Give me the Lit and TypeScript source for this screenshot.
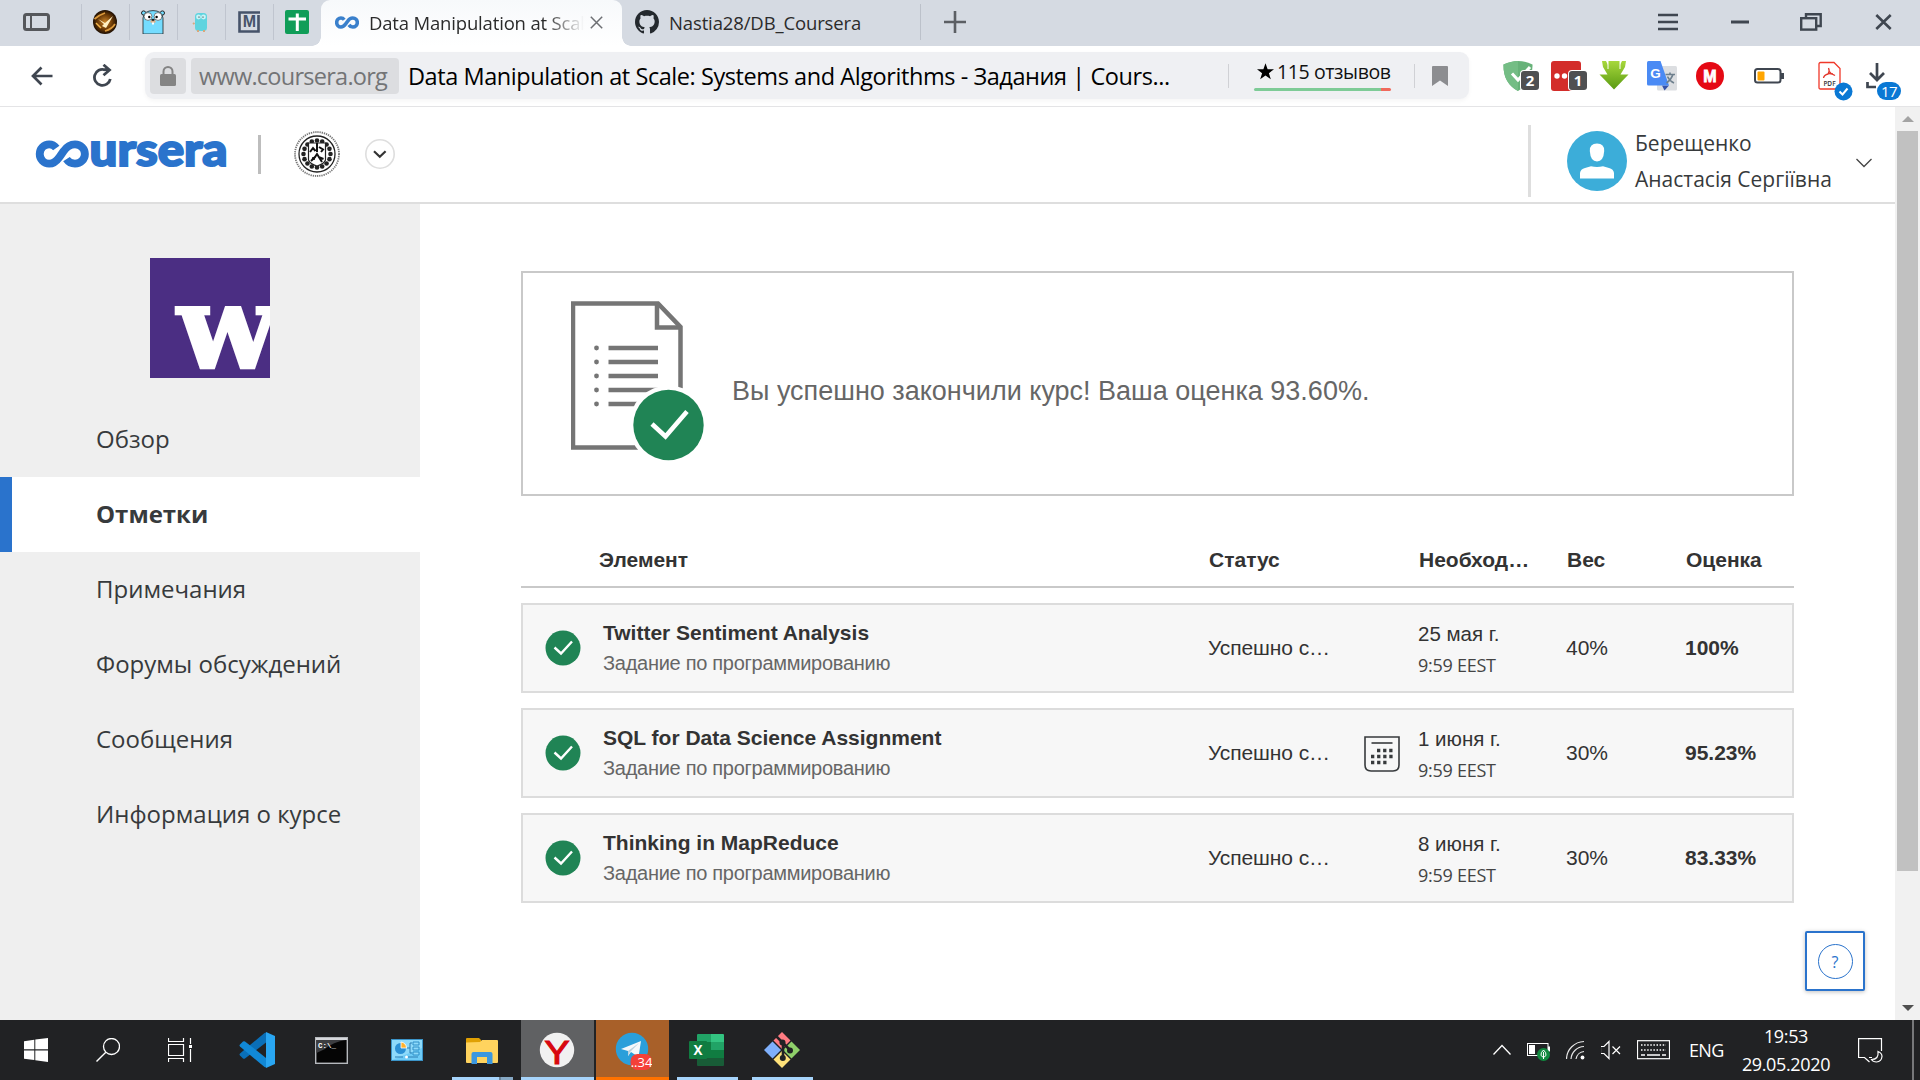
import { LitElement, html, css, svg } from "lit";
import { customElement, property } from "lit/decorators.js";
import { classMap } from "lit/directives/class-map.js";

/* ---------- shared pictures ---------- */

const infinity = (color: string) => svg`
  <path d="M19.5 7.2C17.8 4.9 15.3 3.6 12.6 3.6C7.6 3.6 3.6 7.8 3.6 13S7.6 22.4 12.6 22.4C17 22.4 20 19.6 22.8 15.6L26.6 10.2C29.2 6.3 33 3.6 37.5 3.6C43 3.6 47 7.8 47 13S43 22.4 37.5 22.4C34 22.4 31.2 20.8 29.3 18"
    fill="none" stroke=${color} stroke-width="7.6"/>`;

/* ---------- browser tab strip ---------- */

@customElement("tab-strip")
export class TabStrip extends LitElement {
  static styles = css`
    :host { display: flex; height: 46px; background: #d5dae2; font-family: "Open Sans", "Noto Sans", sans-serif; color: #2b2b2b; }
    .cell { width: 48px; height: 46px; display: flex; align-items: center; justify-content: center; padding-bottom: 2px; box-sizing: border-box; background: linear-gradient(#c0c5cf, #c0c5cf) left 4px / 1px 36px no-repeat; }
    .panel { width: 81px; height: 46px; flex: none; display: flex; align-items: center; padding-left: 23px; padding-bottom: 2px; box-sizing: border-box; }
    .active { width: 301px; height: 46px; margin-left: 0; box-sizing: border-box; padding: 0 18px 2px 14px; display: flex; align-items: center; border-radius: 9px 9px 0 0; background: linear-gradient(#f7f9fb, #fff); flex: none; }
    .title { font-size: 18.5px; letter-spacing: -0.17px; white-space: nowrap; overflow: hidden; width: 215px; margin-left: 10px; mask-image: linear-gradient(90deg, #000 82%, transparent 100%); }
    .close { margin-left: 6px; flex: none; }
    .flare { width: 9px; height: 46px; flex: none; }
    .flare.l { background: radial-gradient(circle at 0 0, transparent 8.5px, #fff 9px) 0 37px / 9px 9px no-repeat; margin-left: -9px; }
    .flare.r { background: radial-gradient(circle at 9px 0, transparent 8.5px, #fff 9px) 0 37px / 9px 9px no-repeat; }
    .other { width: 290px; box-sizing: border-box; padding: 0 0 2px 4px; display: flex; align-items: center; background: linear-gradient(#bcc1ca, #bcc1ca) right 4px / 1px 36px no-repeat; }
    .repo { font-size: 18.5px; letter-spacing: -0.13px; margin-left: 10px; white-space: nowrap; }
    .plus { margin-left: 23px; align-self: center; margin-bottom: 2px; }
    .win { display: flex; align-items: center; margin-left: auto; padding: 0 28px 2px 0; }
    .win svg:nth-child(1) { margin-right: 52px; }
    .win svg:nth-child(2) { margin-right: 51px; }
    .win svg:nth-child(3) { margin-right: 53px; }
    svg { display: block; flex: none; }
  `;
  render() {
    return html`
      <div class="panel"><svg width="27" height="18" viewBox="0 0 27 18"><rect x="1.5" y="1.5" width="24" height="15" rx="2" fill="none" stroke="#55575b" stroke-width="3"/><path d="M8 2V16" stroke="#55575b" stroke-width="2"/></svg></div>
      <div class="cell"><svg width="24" height="24" viewBox="0 0 24 24"><defs><radialGradient id="g"><stop offset="0" stop-color="#c9842a"/><stop offset=".6" stop-color="#6e3c07"/><stop offset="1" stop-color="#1d0e02"/></radialGradient></defs><circle cx="12" cy="12" r="12" fill="url(#g)"/><path d="M1.500 9Q6 5 12 3M22 14Q19 19 12 21" stroke="#dc9a3c" stroke-width="1.800" fill="none"/><path d="M5 9L12 13L20 6L13 18L9 16L11 14Z" fill="#fff1c4"/><path d="M3 13L8 18" stroke="#f4b64c" stroke-width="1.500"/></svg></div>
      <div class="cell"><svg width="24" height="24" viewBox="0 0 24 24"><circle cx="2.6" cy="3" r="2.1" fill="#74dcff" stroke="#222"/><circle cx="21.4" cy="3" r="2.1" fill="#74dcff" stroke="#222"/><path d="M2 24V8Q3 .6 12 .6T22 8V24Z" fill="#74dcff" stroke="#222" stroke-width=".8"/><circle cx="7" cy="6.5" r="3.9" fill="#fff" stroke="#333" stroke-width=".6"/><circle cx="17" cy="6.5" r="3.9" fill="#fff" stroke="#333" stroke-width=".6"/><circle cx="8.3" cy="7" r="1.2"/><circle cx="15.6" cy="7" r="1.2"/><ellipse cx="12" cy="11.4" rx="2.8" ry="1.7" fill="#d8b390"/><ellipse cx="12" cy="9.8" rx="1.7" ry="1.1" fill="#222"/><path d="M11 12.6h2v2h-2z" fill="#fff"/></svg></div>
      <div class="cell"><svg width="24" height="24" viewBox="0 0 24 24"><rect x="6" y="3" width="12" height="18" rx="3.500" fill="#5fd4df"/><path d="M9 20v2M15 20v2M5.500 13l-1.500 1" stroke="#d9a87c" stroke-width="2"/><circle cx="9.500" cy="7" r="2.4" fill="#c9f3f7"/><circle cx="14.500" cy="7" r="2.4" fill="#c9f3f7"/><circle cx="10" cy="7" r=".6"/><circle cx="14" cy="7" r=".6"/></svg></div>
      <div class="cell"><svg width="22" height="22" viewBox="0 0 22 22"><path d="M22 1.5H1.5V20.5H20.5V4" fill="none" stroke="#46536a" stroke-width="2.6"/><text x="11.500" y="16.4" text-anchor="middle" font-family="Liberation Sans" font-weight="700" font-size="16" fill="#46536a">M</text></svg></div>
      <div class="cell"><svg width="24" height="24" viewBox="0 0 24 24"><rect width="24" height="24" rx="2" fill="#109d58"/><path d="M12.3 3.5V21M3.5 9H21" stroke="#fff" stroke-width="3"/></svg></div>
      <div class="flare l"></div>
      <div class="active">
        <svg width="24" height="13" viewBox="0 0 50.6 26">${infinity("#3a80cc")}</svg>
        <div class="title">Data Manipulation at Scale</div>
        <svg class="close" width="13" height="13" viewBox="0 0 13 13"><path d="M.8.8L12.2 12.2M12.2.8L.8 12.2" stroke="#6d6f73" stroke-width="1.5"/></svg>
      </div>
      <div class="flare r"></div>
      <div class="other">
        <svg width="24" height="24" viewBox="0 0 16 16"><path fill="#24292e" d="M8 0C3.58 0 0 3.58 0 8c0 3.54 2.29 6.53 5.47 7.59.4.07.55-.17.55-.38 0-.19-.01-.82-.01-1.49-2.01.37-2.53-.49-2.69-.94-.09-.23-.48-.94-.82-1.13-.28-.15-.68-.52-.01-.53.63-.01 1.08.58 1.23.82.72 1.21 1.87.87 2.33.66.07-.52.28-.87.51-1.07-1.78-.2-3.64-.89-3.64-3.95 0-.87.31-1.59.82-2.15-.08-.2-.36-1.02.08-2.12 0 0 .67-.21 2.2.82.64-.18 1.32-.27 2-.27s1.36.09 2 .27c1.53-1.04 2.2-.82 2.2-.82.44 1.1.16 1.92.08 2.12.51.56.82 1.27.82 2.15 0 3.07-1.87 3.75-3.65 3.95.29.25.54.73.54 1.48 0 1.07-.01 1.93-.01 2.2 0 .21.15.46.55.38A8.01 8.01 0 0 0 16 8c0-4.42-3.58-8-8-8z"/></svg>
        <div class="repo">Nastia28/DB_Coursera</div>
      </div>
      <svg class="plus" width="22" height="22" viewBox="0 0 22 22"><path d="M11 0V22M0 11H22" stroke="#5c5f64" stroke-width="2.6"/></svg>
      <div class="win">
        <svg width="22" height="18" viewBox="0 0 22 18"><path d="M1 2H21M1 9H21M1 16H21" stroke="#3f4650" stroke-width="2.6"/></svg>
        <svg width="18" height="18" viewBox="0 0 18 18"><path d="M0 9H18" stroke="#3f4650" stroke-width="3"/></svg>
        <svg width="22" height="18" viewBox="0 0 22 18"><rect x="1.2" y="5.2" width="15" height="11.4" fill="none" stroke="#3f4650" stroke-width="2.4"/><path d="M6 5V1.3H20.7V13H17" fill="none" stroke="#3f4650" stroke-width="2.4"/></svg>
        <svg width="17" height="16" viewBox="0 0 17 16"><path d="M1.3 1L15.7 15M15.7 1L1.3 15" stroke="#3f4650" stroke-width="2.6"/></svg>
      </div>`;
  }
}

/* ---------- address bar ---------- */

@customElement("address-bar")
export class AddressBar extends LitElement {
  static styles = css`
    :host { display: flex; height: 61px; box-sizing: border-box; background: #fff; border-bottom: 1px solid #e4e4e6; padding: 6px 18px 0 31px; font-family: "Open Sans", "Noto Sans", sans-serif; }
    svg { display: block; flex: none; }
    .nav { display: flex; align-items: center; height: 47px; width: 114px; gap: 40px; flex: none; }
    .field { display: flex; align-items: center; width: 1324px; height: 47px; border-radius: 9px; background: #eff0f3; box-shadow: 0 2px 4px rgba(0,0,0,.04); flex: none; box-sizing: border-box; padding-left: 5px; }
    .lock { width: 36px; height: 36px; background: #dcdde0; border-radius: 4px; display: flex; align-items: center; justify-content: center; margin-right: 5px; }
    .host { width: 208px; height: 36px; line-height: 37px; box-sizing: border-box; padding-left: 8px; background: #dcdde0; border-radius: 4px; color: #737476; font-size: 23.5px; letter-spacing: -0.74px; white-space: nowrap; }
    .name { margin-left: 9px; width: 820px; font-size: 23.5px; letter-spacing: -0.43px; line-height: 34px; padding-top: 1px; color: #000; white-space: nowrap; }
    .sep { width: 1px; height: 24px; background: #d0d1d5; }
    .reviews { margin-left: 25px; width: 137px; height: 38px; display: flex; flex-direction: column; margin-right: 23px; }
    .count { display: flex; align-items: center; height: 29px; margin-bottom: 2px; font-size: 19.5px; letter-spacing: -0.4px; white-space: nowrap; color: #111; padding-left: 3px; gap: 3px; }
    .line { height: 3px; border-radius: 2px; background: linear-gradient(90deg, #7ecb97 127px, #f0695c 127px); }
    .mark { margin-left: 17px; }
    .ext { position: relative; height: 30px; width: 36px; margin-top: 9px; flex: none; }
    .badge { position: absolute; left: 18px; top: 10px; width: 18px; height: 19px; border-radius: 3px; background: #4f5052; color: #fff; font: 700 15px/19px "Open Sans", sans-serif; text-align: center; box-shadow: 0 0 0 1px #fff; }
    .dot { position: absolute; left: 16px; top: 21px; }
    .num { position: absolute; left: 11px; top: 21px; height: 18px; width: 24px; border-radius: 9px; background: #0a78d4; color: #fff; font: 400 15px/18px "Open Sans", sans-serif; text-align: center; letter-spacing: -.5px; box-shadow: 0 0 0 1px #fff; }
    .tools { display: flex; margin-left: 34px; }
    .w48 { width: 48px; } .w49 { width: 49px; } .w59 { width: 58px; } .w64 { width: 64px; }
  `;
  render() {
    return html`
      <div class="nav">
        <svg width="22" height="20" viewBox="0 0 22 20"><path d="M21.5 10H2M10.5 1.5L2 10L10.5 18.5" fill="none" stroke="#3f4650" stroke-width="2.7"/></svg>
        <svg width="20" height="24" viewBox="0 0 20 24"><path d="M12 5.8A8 8 0 1 0 17.3 15M10.5 5.6H16M10.5 .8L16.5 6L10.5 11.2" fill="none" stroke="#3f4650" stroke-width="2.8"/></svg>
      </div>
      <div class="field">
        <div class="lock"><svg width="16" height="20" viewBox="0 0 16 20"><rect y="8" width="16" height="12" rx="1.5" fill="#848484"/><path d="M3.5 9V5.5a4.5 4.5 0 0 1 9 0V9" fill="none" stroke="#848484" stroke-width="2"/></svg></div>
        <div class="host">www.coursera.org</div>
        <div class="name">Data Manipulation at Scale: Systems and Algorithms - Задания | Cours...</div>
        <div class="sep"></div>
        <div class="reviews">
          <div class="count"><svg width="17" height="17" viewBox="0 0 24 23"><path d="M12 0l3 8.4h9l-7.200 5.400 2.700 8.700L12 17.300l-7.500 5.200 2.700-8.700L0 8.400h9z"/></svg><span>115 отзывов</span></div>
          <div class="line"></div>
        </div>
        <div class="sep"></div>
        <svg class="mark" width="16" height="20" viewBox="0 0 16 20"><path d="M0 1Q0 0 1 0H15Q16 0 16 1V20L8 14.500L0 20Z" fill="#8c8d90"/></svg>
      </div>
      <div class="tools">
        <div class="ext w48"><svg width="30" height="30" viewBox="0 0 30 30"><path d="M15 0Q22 0 29.500 3.500Q30 22 15 30Q0 22 .5 3.500Q8 0 15 0Z" fill="#67b279"/><path d="M15 0Q8 0 .5 3.500Q0 22 15 30Z" fill="#74bd85"/><path d="M9 12.500L15 19L27 6" fill="none" stroke="#fff" stroke-width="3"/></svg><div class="badge">2</div></div>
        <div class="ext w48"><svg width="30" height="30" viewBox="0 0 30 30"><rect width="30" height="30" rx="3" fill="#d32d2a"/><circle cx="6" cy="15" r="2.700" fill="#fff"/><circle cx="13.500" cy="15" r="2.700" fill="#fff"/></svg><div class="badge">1</div></div>
        <div class="ext w48"><svg width="30" height="30" viewBox="0 0 30 30"><defs><linearGradient id="a" x2="0" y2="1"><stop stop-color="#a7d83c"/><stop offset="1" stop-color="#5a9a12"/></linearGradient></defs><path d="M3 0H7L9 4V0H21V4L23 0H27L26 6L21.500 13.500H29.500L15 28.500L.5 13.500H8.500L4 6Z" fill="url(#a)"/><path d="M9 0V8M21 0V8" stroke="#fff" stroke-width="1"/></svg></div>
        <div class="ext w49"><svg width="31" height="31" viewBox="0 0 31 31"><rect x="10" y="5" width="20" height="24.500" rx="1.500" fill="#dcdee1"/><path d="M17.500 29.500L22 24.500H15Z" fill="#3451a8"/><path d="M1.500 0H13.500L22 24.500H1.500Q0 24.500 0 23V1.500Q0 0 1.500 0Z" fill="#4a8af4"/><text x="8.500" y="17" text-anchor="middle" font-family="Liberation Sans" font-weight="700" font-size="13.500" fill="#fff">G</text><path d="M18.500 13.500H28M23 11.500V13.500M26 13.500Q24 19 19.500 22M20.500 15.500Q22.500 20 27 22" fill="none" stroke="#6d7f8d" stroke-width="1.600"/></svg></div>
        <div class="ext w59"><svg width="28" height="30" viewBox="0 0 28 30"><circle cx="14" cy="15" r="14" fill="#e50914"/><text x="14" y="20.500" text-anchor="middle" font-family="Liberation Sans" font-weight="700" font-size="16" stroke="#fff" stroke-width=".8" fill="#fff">M</text></svg></div>
        <div class="ext w64"><svg width="31" height="30" viewBox="0 0 31 30"><rect x="1" y="8" width="25.500" height="13.500" rx="2.500" fill="#fff" stroke="#3f4650" stroke-width="2"/><rect x="27" y="12" width="3" height="6" fill="#3f4650"/><rect x="3.500" y="10.500" width="7" height="9" rx="1" fill="#ffa500"/></svg></div>
        <div class="ext w48"><svg width="24" height="30" viewBox="0 0 24 30"><path d="M2.500 1.500H16L22 7.500V28H2.500Q1 28 1 26.500V3Q1 1.500 2.500 1.500Z" fill="#fff" stroke="#f0382a" stroke-width="1.300"/><path d="M5.500 17Q6 14 10 13Q12 10 10.500 7M10 13Q13 12 17 14.500M11 10Q13 13 15 13" fill="none" stroke="#e3362b" stroke-width="1.300"/><text x="11.500" y="25.200" text-anchor="middle" font-family="Open Sans" font-weight="600" font-size="6.500" fill="#333">PDF</text></svg><svg class="dot" width="19" height="19" viewBox="0 0 19 19"><circle cx="9.500" cy="9.500" r="9" fill="#0a78d4"/><path d="M5.500 9.500L8.500 12.500L13.500 6.500" fill="none" stroke="#fff" stroke-width="2"/></svg></div>
        <div class="ext"><svg width="24" height="30" viewBox="0 0 24 30"><path d="M11 2V18M4 12L11 19L18 12M1.500 21V26H10" fill="none" stroke="#3f4650" stroke-width="2.700"/></svg><div class="num">17</div></div>
      </div>`;
  }
}

/* ---------- site header ---------- */

@customElement("site-header")
export class SiteHeader extends LitElement {
  static styles = css`
    :host { display: flex; height: 97px; box-sizing: border-box; border-bottom: 2px solid #dedede; background: #fff; padding: 0 23px 0 36px; font-family: "Open Sans", "Noto Sans", sans-serif; }
    svg { display: block; flex: none; overflow: visible; }
    .left { display: flex; align-items: center; height: 94px; }
    .bar { width: 3px; height: 39px; background: #bdbdbd; margin-left: 28px; }
    .seal { margin-left: 32px; }
    .more { margin-left: 24px; }
    .user { margin-left: auto; display: flex; align-items: center; margin-top: 18px; height: 72px; border-left: 3px solid #dedede; padding-left: 36px; }
    .who { margin: 0 0 1px 8px; width: 221px; font-size: 21px; line-height: 36px; color: #373a3c; letter-spacing: 0; white-space: nowrap; }
    .chev { margin-top: 3px; }
  `;
  render() {
    const dots = Array.from({ length: 16 }, (_, i) => i * Math.PI / 8);
    return html`
      <div class="left">
        <svg width="194" height="40" viewBox="0 -4 194 40">
          <g transform="translate(0,2.600) scale(1.040,1.030)">${infinity("#2a73cc")}</g>
          <text x="53.500" y="28" textLength="138" lengthAdjust="spacingAndGlyphs" font-family="Lato" font-weight="900" font-size="46" fill="#2a73cc" stroke="#2a73cc" stroke-width="2">ursera</text>
        </svg>
        <div class="bar"></div>
        <svg class="seal" width="48" height="48" viewBox="0 0 48 48">
          <circle cx="24" cy="24" r="22" fill="none" stroke="#777" stroke-width="1.800" stroke-dasharray="1.300 .9"/>
          <circle cx="24" cy="24" r="18" fill="#fff" stroke="#222" stroke-width="1.300"/>
          ${dots.map((a) => svg`<circle cx=${24 + 13.5 * Math.cos(a)} cy=${24 + 13.5 * Math.sin(a)} r="2.300" fill="#222"/>`)}
          <path d="M15.500 13H32.500V30Q31 34 24 36Q17 34 15.500 30Z" fill="#fff" stroke="#222" stroke-width="1.200"/>
          <path d="M24 13V22M17 22L20 18L22.500 21M26 17L30 19.500L28 22M18 31L22 27L24 24L29 32M25.500 27L30.500 29M19 28L22 29" stroke="#111" stroke-width="2" fill="none"/>
        </svg>
        <svg class="more" width="30" height="30" viewBox="0 0 30 30"><circle cx="15" cy="15" r="14.200" fill="#fff" stroke="#dedede" stroke-width="1.600"/><path d="M9 12.300L14.800 17.700L20.600 12.300" fill="none" stroke="#333" stroke-width="2.200"/></svg>
      </div>
      <div class="user">
        <svg width="60" height="60" viewBox="0 0 60 60"><circle cx="30" cy="30" r="30" fill="#3cadd9"/><path d="M30 12.500Q37.500 12.500 37.200 20Q36.500 30.500 30 30.500Q23.500 30.500 22.800 20Q22.500 12.500 30 12.500Z" fill="#fff"/><path d="M13 47.500V42Q13.500 38 18 37L24 35.300Q30 36.500 36 35.300L42 37Q46.500 38 47 42V47.500Z" fill="#fff"/></svg>
        <div class="who">Берещенко<br>Анастасія Сергіївна</div>
        <svg class="chev" width="16" height="10" viewBox="0 0 16 10"><path d="M.5 1L8 8.500L15.500 1" fill="none" stroke="#444" stroke-width="1.300"/></svg>
      </div>`;
  }
}

/* ---------- course sidebar ---------- */

@customElement("course-nav")
export class CourseNav extends LitElement {
  static styles = css`
    :host { display: flex; flex-direction: column; width: 420px; flex: none; background: #efefef; font-family: "Open Sans", "Noto Sans", sans-serif; }
    .logo { display: block; margin: 54px 0 24px 150px; }
    .item { height: 75px; line-height: 73px; box-sizing: border-box; padding-left: 84px; border-left: 12px solid transparent; font-size: 24px; color: #373a3c; white-space: nowrap; }
    .on { background: #fff; border-left-color: #2a73cc; font-weight: 700; }
  `;
  private items = ["Обзор", "Отметки", "Примечания", "Форумы обсуждений", "Сообщения", "Информация о курсе"];
  render() {
    return html`
      <svg class="logo" width="120" height="120" viewBox="0 0 120 120"><rect width="120" height="120" fill="#4b2e83"/><text x="28" y="108.700" textLength="99" lengthAdjust="spacingAndGlyphs" font-family="DejaVu Serif" font-weight="700" font-size="80" fill="#fff" stroke="#fff" stroke-width="4.500">W</text></svg>
      ${this.items.map((t, i) => html`<div class=${classMap({ item: true, on: i === 1 })}>${t}</div>`)}`;
  }
}

/* ---------- grades ---------- */

interface Grade { title: string; date: string; weight: string; grade: string; calendar?: boolean }

@customElement("grade-row")
export class GradeRow extends LitElement {
  @property({ attribute: false }) grade!: Grade;
  static styles = css`
    :host { display: grid; grid-template-columns: 80px 605px 156px 54px 148px 119px 1fr; align-items: center; height: 90px; box-sizing: border-box; border: 2px solid #dcdcdc; background: #f7f7f7; margin-bottom: 15px; font: 21px "Liberation Sans", Arial, sans-serif; color: #333; }
    .ok { display: block; margin-left: 22px; }
    .title { font-weight: 700; font-size: 21px; line-height: 30px; white-space: nowrap; }
    .kind { font-size: 20px; line-height: 30px; color: #666; white-space: nowrap; letter-spacing: -0.28px; }
    .date { font-size: 20.500px; line-height: 32px; padding-top: 2px; }
    .time { font: 18px/30px "Open Sans", sans-serif; letter-spacing: -0.27px; color: #444; }
    .status { letter-spacing: -0.1px; }
    .score { font-weight: 700; }
    svg { display: block; }
  `;
  render() {
    const g = this.grade;
    return html`
      <svg class="ok" width="36" height="36" viewBox="0 0 36 36"><circle cx="18" cy="18" r="17.500" fill="#208455"/><path d="M9.500 17.500L16 23.500L27 11.500" fill="none" stroke="#fff" stroke-width="2.400"/></svg>
      <div><div class="title">${g.title}</div><div class="kind">Задание по программированию</div></div>
      <div class="status">Успешно с…</div>
      <div>${g.calendar ? html`<svg width="36" height="37" viewBox="0 -1 36 37"><path d="M1 1H35V29Q35 35 29 35H7Q1 35 1 29Z" fill="none" stroke="#373a3c" stroke-width="1.600"/><path d="M7.500 7H28.500" stroke="#373a3c" stroke-width="1.600"/><path d="M13 14.500H29M7 20.500H29M7 26.500H23" stroke="#373a3c" stroke-width="3.400" stroke-dasharray="3.300 2.800"/></svg>` : ""}</div>
      <div><div class="date">${g.date}</div><div class="time">9:59 EEST</div></div>
      <div>${g.weight}</div>
      <div class="score">${g.grade}</div>`;
  }
}

@customElement("grades-page")
export class GradesPage extends LitElement {
  static styles = css`
    :host { display: block; flex: 1; padding: 67px 101px 0; box-sizing: border-box; font-family: "Liberation Sans", Arial, sans-serif; }
    .card { display: flex; align-items: flex-start; height: 225px; box-sizing: border-box; border: 2px solid #c9c9c9; padding: 28px 0 0 48px; }
    .msg { font-size: 27px; line-height: 36px; color: #666; margin: 72px 0 0 25px; white-space: nowrap; }
    .head { display: grid; grid-template-columns: 610px 210px 148px 119px 1fr; padding-left: 78px; height: 92px; box-sizing: border-box; border-bottom: 2px solid #c9c9c9; margin-bottom: 15px; padding-top: 52px; font-weight: 700; font-size: 21px; line-height: 24px; color: #333; }
    svg { display: block; flex: none; }
  `;
  private grades: Grade[] = [
    { title: "Twitter Sentiment Analysis", date: "25 мая г.", weight: "40%", grade: "100%" },
    { title: "SQL for Data Science Assignment", date: "1 июня г.", weight: "30%", grade: "95.23%", calendar: true },
    { title: "Thinking in MapReduce", date: "8 июня г.", weight: "30%", grade: "83.33%" },
  ];
  render() {
    return html`
      <div class="card">
        <svg width="136" height="164" viewBox="0 0 136 164">
          <path d="M2 2.500H87L109.500 26V146.500H2Z" fill="#fff" stroke="#757575" stroke-width="4.500"/>
          <path d="M86 3V26.500H109.500" fill="none" stroke="#757575" stroke-width="4.500"/>
          ${[0, 1, 2, 3, 4].map((i) => svg`<circle cx="25.500" cy=${47 + i * 14} r="2.400" fill="#757575"/><path d=${`M37.500 ${47 + i * 14}H87`} stroke="#757575" stroke-width="4.600"/>`)}
          <circle cx="97.500" cy="124" r="39.500" fill="#fff"/>
          <circle cx="97.500" cy="124" r="35.200" fill="#208455"/>
          <path d="M81 123L94.500 135.500L116 110.500" fill="none" stroke="#fff" stroke-width="4.600"/>
        </svg>
        <div class="msg">Вы успешно закончили курс! Ваша оценка 93.60%.</div>
      </div>
      <div class="head"><div>Элемент</div><div>Статус</div><div>Необход…</div><div>Вес</div><div>Оценка</div></div>
      ${this.grades.map((g) => html`<grade-row .grade=${g}></grade-row>`)}`;
  }
}

/* ---------- taskbar ---------- */

@customElement("task-bar")
export class TaskBar extends LitElement {
  static styles = css`
    :host { display: flex; height: 60px; background: #212224; color: #fff; font-family: "Open Sans", "Noto Sans", sans-serif; }
    svg { display: block; flex: none; }
    .sys { width: 72px; display: flex; align-items: center; justify-content: center; }
    .apps { display: flex; gap: 2px; margin-left: 5px; }
    .app { width: 73px; height: 60px; box-sizing: border-box; display: flex; align-items: center; justify-content: center; padding-right: 2px; }
    .run { background: linear-gradient(#a6d4fb, #a6d4fb) 6px 57px / 61px 3px no-repeat; }
    .multi { background: linear-gradient(90deg, #a6d4fb 47px, #6b8499 47px, #6b8499 49px, #86a8c4 49px) 6px 57px / 61px 3px no-repeat; }
    .cur { background: linear-gradient(#a6d4fb, #a6d4fb) 0 57px / 73px 3px no-repeat #606163; }
    .alert { background: linear-gradient(#ff7200, #ff7200) 0 57px / 73px 3px no-repeat #a86029; }
    .tray { margin-left: auto; display: flex; align-items: center; }
    .tray svg.pad { margin-left: 16px; }
    .lang { font-size: 18px; letter-spacing: -0.7px; width: 33px; margin-left: 19px; padding-bottom: 1px; }
    .clock { width: 100px; margin-left: 14px; font-size: 18px; line-height: 28px; text-align: center; letter-spacing: -0.36px; }
    .note { margin-left: 22px; }
    .edge { width: 2px; height: 60px; background: #77787a; margin: 0 6px 0 29px; }
  `;
  render() {
    return html`
      <div class="sys"><svg width="24" height="24" viewBox="0 0 24 24"><path d="M0 3.200L10.300 1.800V11.300H0ZM11.300 1.600L24 0V11.300H11.300ZM0 12.400H10.300V22L0 20.700ZM11.300 12.400H24V24L11.300 22.200Z" fill="#fff"/></svg></div>
      <div class="sys"><svg width="24" height="24" viewBox="0 0 24 24"><circle cx="15.500" cy="8.500" r="8" fill="none" stroke="#fff" stroke-width="1.300"/><path d="M9.800 14.200L.5 23.500" stroke="#fff" stroke-width="1.400"/></svg></div>
      <div class="sys"><svg width="24" height="24" viewBox="0 0 24 24"><path d="M.5 0V3.500H15.500V0M.5 24V20.500H15.500V24M.5 6.500H15.500V17.500H.5ZM22.500 0V6M22.500 11V24" fill="none" stroke="#fff" stroke-width="1.200"/><rect x="21" y="7" width="3" height="3" fill="#fff"/></svg></div>
      <div class="apps">
        <div class="app"><svg width="36" height="36" viewBox="0 0 36 36"><path d="M1 23.500L4 26.500Q5 27.200 6 26.500L27 10.500V.5L25.500 1L1 21.500Q0 22.500 1 23.500Z" fill="#0a6fb8"/><path d="M1 12.500L4 9.500Q5 8.800 6 9.500L17 18L27 26V35.500L25.500 35L1 14.500Q0 13.500 1 12.500Z" fill="#1188d6"/><path d="M27 0L36 4V32L27 36Z" fill="#29a6f2"/></svg></div>
        <div class="app"><svg width="33" height="27" viewBox="0 0 33 27"><rect x=".7" y=".7" width="31.600" height="25.600" fill="#050505" stroke="#b6b9bd" stroke-width="1.400"/><path d="M1 1H32V3H1Z" fill="#d6d8dc"/><path d="M1.500 3H31Q18 5 10 12L1.500 16Z" fill="#3c3d40"/><text x="3" y="10.500" font-family="Liberation Mono" font-weight="700" font-size="7.500" fill="#fff">C:\\_</text></svg></div>
        <div class="app"><svg width="32" height="22" viewBox="0 0 32 22"><rect x=".5" y=".5" width="31" height="21" fill="#6ecbf6" stroke="#3b94c8"/><path d="M1 1H31V9L1 21Z" fill="#8edafa"/><circle cx="9.500" cy="9.500" r="5.500" fill="#2c91d5"/><path d="M10 9V3A6 6 0 0 1 15.500 9Z" fill="#ffb22c" stroke="#fff" stroke-width=".8"/><path d="M16 9H19V4H21M19 9V14H21M4 18H12" stroke="#2c7fb5" fill="none"/><path d="M22 3H28V6H22ZM22 8H28V11H22ZM22 13H28V16H22Z" fill="#8edafa" stroke="#2e8fc8"/><path d="M14 18H27" stroke="#2c7fb5"/><circle cx="15.500" cy="18" r="1.500" fill="#fff"/></svg></div>
        <div class="app multi"><svg width="32" height="27" viewBox="0 0 32 27"><path d="M0 2Q0 1 1 1H13L15 3V7H0Z" fill="#e0a003"/><path d="M0 5.500L14 5L16 3H31Q32 3 32 4V25Q32 26 31 26H1Q0 26 0 25Z" fill="#ffd35e"/><path d="M5.500 27V17Q5.500 15 7.500 15H24.500Q26.500 15 26.500 17V27H21V20H11V27Z" fill="#3b97df"/></svg></div>
        <div class="app cur"><svg width="36" height="36" viewBox="0 0 36 36"><circle cx="18" cy="18" r="17.200" fill="#f1f1f1"/><text x="18" y="31.500" text-anchor="middle" textLength="25" lengthAdjust="spacingAndGlyphs" font-family="Liberation Sans" font-weight="400" font-size="34" fill="#d8070f" stroke="#d8070f" stroke-width="1.200">Y</text></svg></div>
        <div class="app alert"><svg width="40" height="40" viewBox="0 0 40 40"><circle cx="20" cy="19" r="16.200" fill="#2b9fda"/><path d="M9 19L29 11L26.500 27L19 22L16 26V21Z" fill="#f4f8fb"/><path d="M16 21L27 13L18 22L16 26Z" fill="#b9cfdd"/><rect x="18.500" y="24" width="21.500" height="16" rx="7" fill="#f44039"/><text x="29.500" y="37" text-anchor="middle" font-family="Open Sans" font-size="13" fill="#fff">..34</text></svg></div>
        <div class="app run"><svg width="36" height="34" viewBox="0 0 36 34"><path d="M8 9V2Q8 1 9 1H22V9Z" fill="#21a366"/><path d="M22 1H34Q35 1 35 2V9H22Z" fill="#33c481"/><path d="M8 9H22V25H8Z" fill="#107c41"/><path d="M22 9H35V17H22Z" fill="#21a366"/><path d="M22 17H35V25H22Z" fill="#107c41"/><path d="M8 25H35V32Q35 33 34 33H9Q8 33 8 32Z" fill="#185c37"/><rect y="8" width="18" height="18" rx="1" fill="#107c41"/><text x="9" y="21.500" text-anchor="middle" font-family="Open Sans" font-weight="700" font-size="13.500" fill="#fff">X</text></svg></div>
        <div class="app run"><svg width="36" height="36" viewBox="0 0 36 36"><path d="M18 0L26.500 8.500L18 17L9.500 8.500Z" fill="#ff7c82"/><path d="M27.500 9.500L36 18L27.500 26.500L19 18Z" fill="#8fd06a"/><path d="M8.500 9.500L17 18L8.500 26.500L0 18Z" fill="#7fb0fb"/><path d="M18 19L26.500 27.500L18 36L9.500 27.500Z" fill="#ffe27a"/><path d="M12 4L19 11V26M19 11L26 18" fill="none" stroke="#212224" stroke-width="2.600"/><circle cx="18.500" cy="10.500" r="3" fill="#212224"/><circle cx="18.800" cy="26" r="3" fill="#212224"/><circle cx="26" cy="18.500" r="3" fill="#212224"/></svg></div>
      </div>
      <div class="tray">
        <svg width="18" height="12" viewBox="0 0 18 12"><path d="M.5 10.500L9 1.500L17.500 10.500" fill="none" stroke="#fff" stroke-width="1.300"/></svg>
        <svg class="pad" width="23" height="22" viewBox="0 0 23 22"><rect x=".5" y="4.500" width="20.500" height="12" fill="none" stroke="#fff"/><rect x="21" y="7.500" width="2" height="5" fill="#fff"/><rect x="2" y="6" width="6" height="9" fill="#fff"/><circle cx="16.500" cy="15.500" r="6.500" fill="#10893e"/><path d="M16.500 11Q13.500 13.500 14 16.500L16.500 18.500L19 16.500Q19.500 13.500 16.500 11ZM16.500 13V20" fill="none" stroke="#fff"/></svg>
        <svg class="pad" width="19" height="20" viewBox="0 0 19 20"><path d="M.5 19A18 18 0 0 1 18 1.500M5 19A13.500 13.500 0 0 1 18 6.500M10 19A9 9 0 0 1 18 11.500" fill="none" stroke="#e8e8e8" stroke-width="1.200"/><circle cx="16.500" cy="17.500" r="1.900" fill="#fff"/></svg>
        <svg class="pad" width="20" height="20" viewBox="1 0 20 20"><path d="M.5 6.500H4L9 1.500V18.500L4 13.500H.5Z" fill="none" stroke="#fff" stroke-width="1.200"/><path d="M12.500 6.500L20 14M20 6.500L12.500 14" stroke="#fff" stroke-width="1.200"/></svg>
        <svg class="pad" width="33" height="20" viewBox="0 0 33 20"><rect x=".5" y=".7" width="32" height="18" fill="none" stroke="#fff" stroke-width="1.200"/><path d="M4 5H29M4 10H29" stroke="#fff" stroke-width="1.400" stroke-dasharray="1.500 1.600"/><path d="M4 15H8M10 15H23M25 15H29" stroke="#fff" stroke-width="1.300"/></svg>
        <div class="lang">ENG</div>
        <div class="clock">19:53<br>29.05.2020</div>
        <svg class="note" width="25" height="25" viewBox="0 0 25 25"><path d="M14 19.500H11M11.500 24L6.500 19.500H.6V.6H23.500V13" fill="none" stroke="#fff" stroke-width="1.200"/><path d="M20 13.500Q24 15 24 18.500Q23.500 23.500 18.500 24Q15 24 13.500 21.500Q21 21.500 20 13.500Z" fill="#212224" stroke="#fff" stroke-width="1.200"/></svg>
        <div class="edge"></div>
      </div>`;
  }
}

/* ---------- whole screen ---------- */

@customElement("app-root")
export class AppRoot extends LitElement {
  static styles = css`
    :host { display: flex; flex-direction: column; width: 1920px; height: 1080px; overflow: hidden; background: #fff; }
    .view { display: flex; height: 913px; }
    .page { position: relative; width: 1895px; display: flex; flex-direction: column; }
    .body { display: flex; flex: 1; }
    .scroll { width: 25px; background: #f1f1f1; display: flex; flex-direction: column; align-items: center; }
    .up { border: 6px solid transparent; border-top: 0; border-bottom: 6px solid #a3a3a3; margin: 9px 0; }
    .thumb { width: 21px; height: 740px; background: #c1c1c1; }
    .down { border: 6px solid transparent; border-bottom: 0; border-top: 6px solid #505050; margin: auto 0 9px; }
    .help { position: absolute; left: 1805px; top: 824px; width: 60px; height: 60px; box-sizing: border-box; border: 2px solid #2a73cc; border-radius: 2px; background: #fff; box-shadow: 0 1px 4px rgba(0,0,0,.25); display: flex; align-items: center; justify-content: center; }
    .ring { width: 35px; height: 35px; box-sizing: border-box; border: 1.500px solid #2a73cc; border-radius: 50%; color: #2a73cc; font: 16px/35px "Open Sans", sans-serif; text-align: center; }
  `;
  render() {
    return html`
      <tab-strip></tab-strip>
      <address-bar></address-bar>
      <div class="view">
        <div class="page">
          <site-header></site-header>
          <div class="body"><course-nav></course-nav><grades-page></grades-page></div>
          <div class="help"><div class="ring">?</div></div>
        </div>
        <div class="scroll"><div class="up"></div><div class="thumb"></div><div class="down"></div></div>
      </div>
      <task-bar></task-bar>`;
  }
}
